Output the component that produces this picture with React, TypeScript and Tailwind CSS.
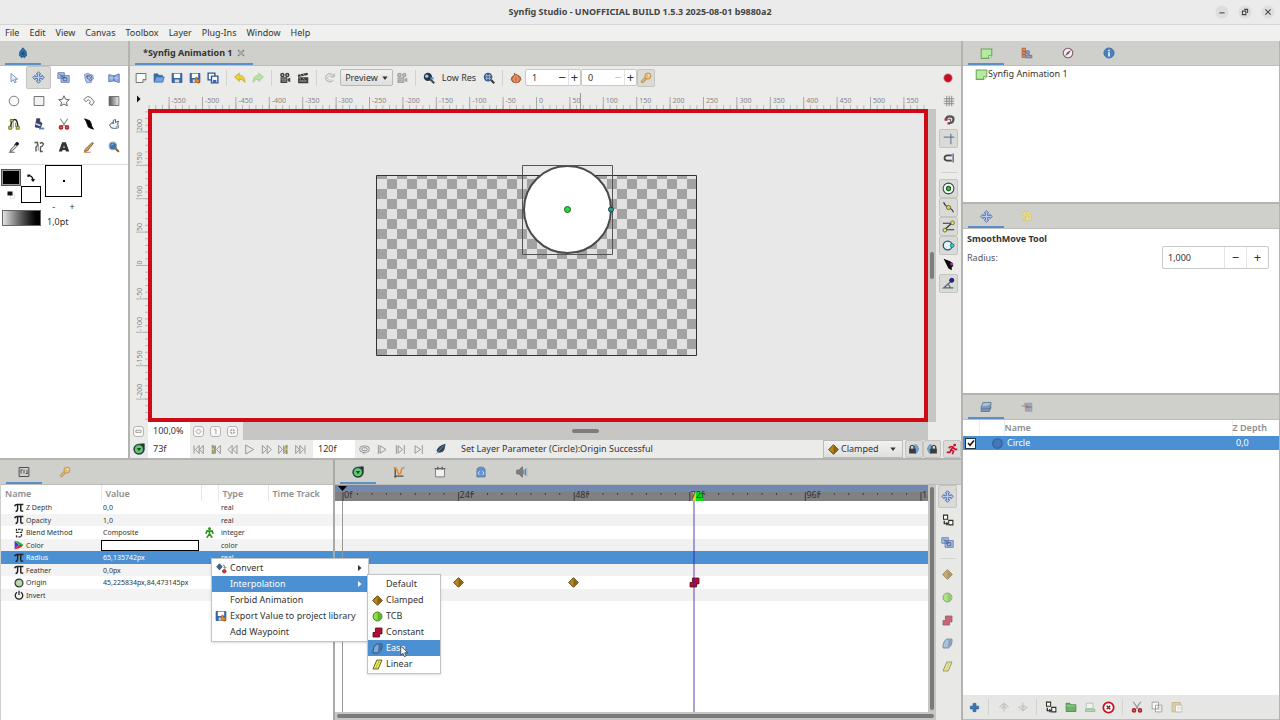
import type { ReactNode } from "react";

type IconProps = { className?: string };

function Svg({ children, className = "size-3", box = "0 0 16 16" }: { children: ReactNode; className?: string; box?: string }) {
  return (
    <svg viewBox={box} className={`shrink-0 ${className}`} fill="none" aria-hidden="true">
      {children}
    </svg>
  );
}

/* ---------- tool icons ---------- */

const Arrow = () => (
  <Svg><path d="M4 2v11l3-2.600 2 4 2-1-2-3.800h4z" fill="#e8eefc" stroke="#5b76ad" /></Svg>
);
const Move = ({ className = "size-[13px]" }: IconProps) => (
  <Svg className={className}>
    <path d="M8 .8l2.800 3H9.300v2.900h2.900V5.200l3 2.800-3 2.800V9.300H9.300v2.900h1.500L8 15.200l-2.800-3h1.500V9.300H3.800v1.500L.8 8l3-2.800v1.500h2.900V3.800H5.200z" fill="#b9cbf0" stroke="#4a68a6" />
  </Svg>
);
const Scale = ({ className = "size-[13px]" }: IconProps) => (
  <Svg className={className}>
    <path d="M1 2h8v7H1zM5 5.500h10V14H5z" fill="#a9bde6" stroke="#6079ab" />
    <path d="M3 4l7 5M7 8h5v4H8z" stroke="#40588f" />
  </Svg>
);
const Rotate = () => (
  <Svg>
    <path d="M2 3l5-1.500 2 1.500 4 1 1 5-2 2-1 3-6 .5-2-4z" fill="#b7c7ea" stroke="#7388b6" />
    <path d="M4 8a4 4 0 1 1 4 4M6 5l4 2-1 3-3-1z" stroke="#4a62a0" />
  </Svg>
);
const Mirror = () => (
  <Svg>
    <path d="M1 3.500l6.500 1.500v7L1 13zM15 2.500L8 5v7l7 2z" fill="#8fb0e4" stroke="#4668a6" />
    <path d="M2 8h12" stroke="#c6d8f6" />
  </Svg>
);
const CircleTool = () => <Svg><circle cx="8" cy="8" r="6.400" fill="#fafafa" stroke="#555" /></Svg>;
const RectTool = () => <Svg><path d="M1.500 2h13v12h-13z" fill="#f2f2f2" stroke="#666" strokeWidth="1.200" /></Svg>;
const StarTool = () => (
  <Svg><path d="M8 1l2.100 4.700 5 .5-3.800 3.400 1.100 5L8 12l-4.400 2.600 1.100-5L.9 6.200l5-.5z" fill="#fafafa" stroke="#555" strokeWidth="1.200" /></Svg>
);
const PolyTool = () => (
  <Svg><path d="M1 6l5-4 4 1 5 6-3 5-4-3 2-2-3-3-3 3z" fill="#fafafa" stroke="#666" strokeWidth="1.200" /></Svg>
);
const GradTool = () => (
  <Svg>
    <defs><linearGradient id="gt"><stop stopColor="#555" /><stop offset="1" stopColor="#eee" /></linearGradient></defs>
    <path d="M1.500 2h13v12h-13z" fill="url(#gt)" stroke="#555" />
  </Svg>
);
const Spline = () => (
  <Svg>
    <path d="M3 13L5 5q1-3 4-3 4 0 4 11" stroke="#2b2b2b" strokeWidth="2" />
    <path d="M7 13V6M10 6v6" stroke="#777" />
    <path d="M1 11h4v4H1zM11 11h4v4h-4zM3 2h4v3H3z" fill="#d5cc3a" stroke="#555a20" />
  </Svg>
);
const Bucket = () => (
  <Svg>
    <path d="M5 1h4v4l3 2-2 6-7-1 1-5z" fill="#38476f" stroke="#222b44" />
    <path d="M4 8l6 2" stroke="#dce4f6" strokeWidth="2" />
    <path d="M8 14h7" stroke="#5c87cc" strokeWidth="2.500" />
  </Svg>
);
const Scissors = ({ className = "size-3" }: IconProps) => (
  <Svg className={className}>
    <path d="M3 1l6.500 9.500M13 1L6.500 10.500" stroke="#999" strokeWidth="1.700" />
    <circle cx="4" cy="12.500" r="2.300" fill="#b3202c" stroke="#b3202c" strokeWidth="1.500" />
    <circle cx="12" cy="12.500" r="2.300" fill="#b3202c" stroke="#b3202c" strokeWidth="1.500" />
    <path d="M3.500 12.500h1M11.500 12.500h1" stroke="#f0d0d0" strokeWidth="1.500" />
  </Svg>
);
const Feather = ({ className = "size-3" }: IconProps) => (
  <Svg className={className}><path d="M2 1l7 2.500 2 4 .5 3L14 15l-4-1.500L7 12 5.500 8 4 4z" fill="#050505" stroke="#000" /></Svg>
);
const Sketch = () => (
  <Svg>
    <path d="M2 9l4-3 1 2V3l3-1v4l4-2-1 4 1 5-5 1-5-1z" fill="#f0f4fa" stroke="#506070" strokeWidth="1.300" />
    <circle cx="12" cy="12" r="2" fill="#9db4d6" />
  </Svg>
);
const Dropper = () => (
  <Svg>
    <path d="M9 5l2-3q2-1 3 1t-2 3l-3 1z" fill="#151515" stroke="#151515" />
    <path d="M10 5l-6 6-1 3 3-1 6-6" fill="#cfe0f0" stroke="#333" />
    <path d="M1 15h8" stroke="#333" />
  </Svg>
);
const Brushes = () => (
  <Svg>
    <path d="M2 2h4v4l-2 2v6M9 3l3-1 2 2-2 3-2 1v6h3" stroke="#555" strokeWidth="1.800" />
    <path d="M7 4v9" stroke="#999" strokeWidth="1.500" />
  </Svg>
);
const TextTool = () => (
  <Svg>
    <path d="M5.500 1.500h5L15 14H10.500l-.6-2H6.200l-.6 2H1z" fill="#333" />
    <path d="M8 5.500l1.100 3.700H6.900z" fill="#eee" />
  </Svg>
);
const Pencil = () => (
  <Svg>
    <path d="M3 11L12 2l2 1-8 10-4 1z" fill="#d9a04b" stroke="#6c4a22" />
    <path d="M1 15h9" stroke="#b8482f" />
  </Svg>
);
const Zoom = ({ className = "size-3" }: IconProps) => (
  <Svg className={className}>
    <circle cx="6.500" cy="6.500" r="5" fill="#3f73ad" stroke="#9aa7b6" strokeWidth="1.500" />
    <path d="M10 10l4.500 4.500" stroke="#8b5b28" strokeWidth="2.600" />
    <path d="M4 6q1-2 3-2" stroke="#b8d3f0" />
  </Svg>
);

/* ---------- file and render icons ---------- */

const NewDoc = () => (
  <Svg>
    <path d="M1.500 2h13v8l-4 4h-9z" fill="#fafafa" stroke="#666" strokeWidth="1.200" />
    <path d="M10.500 14v-4h4" fill="#ccc" stroke="#666" />
  </Svg>
);
const Open = () => (
  <Svg>
    <path d="M1.500 13V2.500h5l1 2h5V7" fill="#3c6ca6" stroke="#2f5c94" />
    <path d="M1.500 13.500L4 6.500h11l-2 7z" fill="#71a4dd" stroke="#3c6ca6" />
  </Svg>
);
const Save = ({ pencil = false }: { pencil?: boolean }) => (
  <Svg>
    <path d="M1.500 2h13v12h-13z" fill="#3d68a8" stroke="#274b80" />
    <path d="M3.800 2.200h8.400V8H3.800z" fill="#fff" />
    <path d="M5 10h6v4H5z" fill="#d5dae2" />
    {pencil && <path d="M9 7h2v3h3l-1 5-5-2z" fill="#ea8a2c" stroke="#b35d12" />}
  </Svg>
);
const SaveAll = () => (
  <Svg>
    <path d="M1.500 1.500h9v9h-9z" fill="#fff" stroke="#2c5596" strokeWidth="1.800" />
    <path d="M6 5.500h8.500v9H6z" fill="#fff" stroke="#2c5596" strokeWidth="1.800" />
    <path d="M8 10.500h4.500v4H8z" fill="#3d68a8" />
  </Svg>
);
const Undo = () => (
  <Svg><path d="M.8 6.500L7 1.500v3q8 0 7.500 9.500-2-4.500-7.500-4.500v3z" fill="#ecd03c" stroke="#c3a21e" /></Svg>
);
const Redo = () => (
  <Svg><path d="M15.200 6.500L9 1.500v3q-8 0-7.500 9.500 2-4.500 7.500-4.500v3z" fill="#b9e3a2" stroke="#9bcb83" /></Svg>
);
const Camera = ({ c = "#444" }: { c?: string }) => (
  <Svg>
    <circle cx="4.500" cy="4" r="3" fill={c} />
    <circle cx="11" cy="4" r="3" fill={c} />
    <path d="M2 7h9v7.500H2zM11.500 9L15 7.500v6l-3.500-1.500z" fill={c} />
    <path d="M3 9.500h7M4 12h6" stroke="#ddd" strokeWidth=".8" />
    <circle cx="4.500" cy="4" r="1" fill="#ddd" /><circle cx="11" cy="4" r="1" fill="#ddd" />
  </Svg>
);
const Clapper = () => (
  <Svg>
    <path d="M1 3.500L14 1l.5 3L1.500 6.500zM1.500 7h13.500v8H1.500z" fill="#3b3b3b" />
    <path d="M4 3l2 2.500M8 2.300l2 2.400M3 8l2 1.500M8 8l2 1.500M3 12h10" stroke="#ccc" />
  </Svg>
);
const Refresh = () => (
  <Svg>
    <path d="M12.500 10.500a5.500 5.500 0 1 1 0-5.500M13.500 2v4.500H9" stroke="#a5a5a5" strokeWidth="1.300" />
    <path d="M10 10a3 3 0 1 1 0-4" stroke="#bbb" />
  </Svg>
);
const ResDown = () => (
  <Svg>
    <circle cx="6.500" cy="6.500" r="5.500" fill="#26354b" />
    <circle cx="5" cy="5.500" r="2.300" fill="#a9c7e7" />
    <path d="M10 10l5 5" stroke="#444" strokeWidth="2.500" />
    <path d="M10 7h4v3h-4z" fill="#5f8ec7" />
  </Svg>
);
const ResUp = () => (
  <Svg>
    <circle cx="6.800" cy="6.800" r="5.800" fill="#3a5c8c" />
    <path d="M3 5h8M3 8.500h8M5 3v8M8.600 3v8" stroke="#b9cee6" strokeWidth=".9" />
    <path d="M11 11l4 4" stroke="#333" strokeWidth="2.500" />
  </Svg>
);
const Onion = () => (
  <Svg>
    <path d="M6 1.500q1 2 4 2.500 5 2 4.500 6-1.500 4.500-6.500 4.500T1.500 10q0-4 4-5.500z" fill="#d0754a" stroke="#8a482b" />
    <path d="M7 5Q3 9 7 14M8.500 5q4 4 1 9" stroke="#f0b898" />
  </Svg>
);
const Key = ({ className = "size-3" }: IconProps) => (
  <Svg className={className}>
    <path d="M8 8l-6 6" stroke="#a87b30" strokeWidth="3.600" />
    <path d="M8 8l-5.800 5.800" stroke="#e6bd71" strokeWidth="1.900" />
    <circle cx="10.600" cy="5.400" r="4.100" fill="#e6bd71" stroke="#b48a40" />
    <circle cx="11.800" cy="4.200" r="1" fill="#fff" />
  </Svg>
);

/* ---------- canvas side tools ---------- */

const Grid = () => <Svg><path d="M5 1v14M8.300 1v14M11.600 1v14M1 5h14M1 8.300h14M1 11.600h14" stroke="#777" /></Svg>;
const MagnetGrid = () => (
  <Svg>
    <path d="M4 8q0-5 5-5t5 4q0 5-6 5" stroke="#555" strokeWidth="3" />
    <path d="M2 6h4v3H2zM6 11h3v3H6z" fill="#a5314c" />
    <path d="M7 7h3v3" stroke="#222" />
  </Svg>
);
const Guides = () => <Svg><path d="M1 5.500h14M10.500 1v14" stroke="#4e6b8c" strokeWidth="1.300" /></Svg>;
const MagnetGuide = () => (
  <Svg>
    <path d="M11 4.500H6q-4 0-4 3.500t4 3.500h5" stroke="#444" strokeWidth="2.300" />
    <path d="M13.500 2v12" stroke="#3a4f90" strokeWidth="1.600" />
    <path d="M10 3.300h2v2.400h-2zM10 10.300h2v2.400h-2z" fill="#c8405a" />
  </Svg>
);
const Target = () => (
  <Svg className="size-[13px]">
    <circle cx="8" cy="8" r="6.600" fill="#f4f8f4" stroke="#2c4a46" strokeWidth="1.300" />
    <circle cx="8" cy="8" r="2.600" fill="#35c435" stroke="#17621d" strokeWidth="1.300" />
  </Svg>
);
const Vertex = () => (
  <Svg className="size-[13px]">
    <path d="M2 1.500q1 4 6 6.500 5 2 6 6" stroke="#333" strokeWidth="1.300" />
    <circle cx="8" cy="8" r="2.600" fill="#dfd535" stroke="#555" />
  </Svg>
);
const Tangent = () => (
  <Svg className="size-[13px]">
    <path d="M1 4h11M12 4L3 12M5 12h10" stroke="#333" strokeWidth="1.400" />
    <circle cx="13" cy="3.500" r="2.300" fill="#f0ea48" stroke="#555" />
    <circle cx="3.500" cy="12.500" r="2.300" fill="#f0ea48" stroke="#555" />
  </Svg>
);
const RadiusH = () => (
  <Svg className="size-[13px]">
    <circle cx="7" cy="8" r="5.500" fill="#e6f2f4" stroke="#1c5a66" strokeWidth="1.600" />
    <circle cx="12.500" cy="8" r="2.300" fill="#3bd6d6" stroke="#155a66" />
  </Svg>
);
const WidthH = () => (
  <Svg className="size-[13px]">
    <path d="M2 1l8 3 3 2 1 4-2 1v4l-4-2-2-4z" fill="#070707" />
    <circle cx="12" cy="7.500" r="1.900" fill="#b22aa0" />
  </Svg>
);
const AngleH = () => (
  <Svg className="size-[13px]">
    <path d="M12.500 4L2 13.500h12M7 9q3 1.500 3 4.500" stroke="#536778" strokeWidth="1.500" />
    <circle cx="12" cy="4" r="2.500" fill="#23239a" stroke="#0e0e5c" />
  </Svg>
);

/* ---------- interpolation shapes ---------- */

const Clamped = ({ className = "size-[11px]" }: IconProps) => (
  <Svg className={className}>
    <path d="M8 1l7 7-7 7-7-7z" fill="#b9861f" stroke="#5b420f" strokeWidth="1.400" />
    <path d="M8 2v12l6-6z" fill="#8a6112" />
  </Svg>
);
const Tcb = ({ className = "size-[11px]" }: IconProps) => (
  <Svg className={className}>
    <circle cx="8" cy="8" r="6.500" fill="#8be04a" stroke="#3a6b1f" strokeWidth="1.300" />
    <path d="M8 1.800a6.200 6.200 0 0 1 0 12.400z" fill="#5cb82a" />
  </Svg>
);
const Constant = ({ className = "size-[11px]" }: IconProps) => (
  <Svg className={className}><path d="M5 1.500h9.500V10H11v4.500H1.500V8H5z" fill="#b00f33" stroke="#650a1e" strokeWidth="1.300" /></Svg>
);
const Ease = ({ className = "size-[11px]" }: IconProps) => (
  <Svg className={className}>
    <path d="M6.500 1.500h8V6q-.5 6-5 8.500h-8V11q.5-6 5-9.500z" fill="#7fa9d6" stroke="#274668" strokeWidth="1.300" />
    <path d="M9.500 2.500h4.500V6q-.5 5-5 7.500H8q2-4 1.500-11z" fill="#456f9f" />
  </Svg>
);
const Linear = ({ className = "size-[11px]" }: IconProps) => (
  <Svg className={className}>
    <path d="M7 1.500h7.500L9 14.500H1.500z" fill="#f0ee5a" stroke="#5e5d22" strokeWidth="1.400" />
    <path d="M10.500 2.500L5.500 13.500" stroke="#b9b63a" strokeWidth="1.500" />
  </Svg>
);

/* ---------- playback and panels ---------- */

const play: Record<string, ReactNode> = {
  first: <path d="M1.500 2v12M3.500 8L9 2v12zM9.500 8L15 2v12z" />,
  prev: <path d="M8 8L2 2v12zM15 8L9 2v12z" transform="matrix(-1 0 0 1 16.500 0)" />,
  play: <path d="M2.500 1.500L14 8 2.500 14.500z" />,
  next: <path d="M8 8L2 2v12zM15 8L9 2v12z" />,
  last: <path d="M14.500 2v12M12.500 8L7 2v12zM6.500 8L1 2v12z" />,
  prevKey: <><path d="M9.500 8L15 2v12zM8 2v12" /><path d="M4 14.500V8M4 1.500V7" stroke="#a2964a" strokeWidth="3" /><path d="M6.500 3v11" /></>,
  nextKey: <><path d="M6.500 8L1 2v12zM8 2v12" /><path d="M12.500 14.500V8M12.500 1.500V7" stroke="#a2964a" strokeWidth="3" /><path d="M10 3v11" /></>,
  loop: <><rect x="1" y="3" width="14" height="9" rx="4.500" /><rect x="4" y="5.500" width="8" height="4" rx="2" /><path d="M6 12l2 3" /></>,
  bound: <path d="M2 1.500v13M4.500 2.500L13 8l-8.500 5.500z" />,
  boundBoth: <path d="M2 1.500v13M4.500 2.500L11 8l-6.500 5.500zM13.500 1.500v13" />,
  boundEnd: <path d="M3 2.500L11 8l-8 5.500zM13.500 1.500v13" />,
};
const Play = ({ kind }: { kind: string }) => (
  <Svg className="size-[11px]"><g stroke="#858585" strokeWidth="1.200">{play[kind]}</g></Svg>
);
const TimeLeaf = ({ className = "size-3" }: IconProps) => (
  <Svg className={className}>
    <path d="M15 1v8q-1 6-7 6T1 8.500Q1 2 8 1.500z" fill="#243f38" stroke="#1d3833" />
    <circle cx="7.800" cy="8.200" r="5" fill="#58d44e" stroke="#8ab5e8" strokeWidth=".8" />
    <path d="M5 6.500h6L8 11z" fill="#1d4e2a" />
  </Svg>
);
const Quill = () => (
  <Svg>
    <path d="M14 1Q5 3 2 10l2 3q8 0 9-6z" fill="#2f4459" />
    <path d="M1 15L12 3" stroke="#8da3ba" />
  </Svg>
);
const LockPast = ({ flip = false }: { flip?: boolean }) => (
  <Svg>
    <g transform={flip ? "matrix(-1 0 0 1 16 0)" : undefined}>
      <path d="M8 2h4l3 6-3 6H8z" fill="#6d9fd0" />
      <path d="M3 8V5q2.500-4 5 0v3" stroke="#333" strokeWidth="1.600" />
      <path d="M1.500 7.500h9V14h-9z" fill="#3c3c3c" />
    </g>
  </Svg>
);
const Runner = () => (
  <Svg>
    <circle cx="11.500" cy="2.800" r="1.900" fill="#c8102a" />
    <path d="M10 5L6.500 9l3.500 2-1.500 4M6.500 9.500L5 12.500H1M10 5H5.500L3.500 7M10 6.500l2 2h3" stroke="#c8102a" strokeWidth="2.100" />
  </Svg>
);
const Params = () => (
  <Svg>
    <path d="M1.500 2h13v12h-13z" stroke="#4c4c4c" strokeWidth="1.300" />
    <path d="M4 5v5M4 5h2M8 5v5M12 5v5M10.500 10H13" stroke="#4c4c4c" strokeWidth="1.300" />
  </Svg>
);
const Graph = () => (
  <Svg>
    <path d="M3 3v10.500h11M1.500 14.500h3M3 1.500v3" stroke="#444" strokeWidth="1.800" />
    <path d="M1 3q4-1 5 4t4 3q1-1 1-4t4-4" stroke="#e8872c" strokeWidth="2.300" />
  </Svg>
);
const Meta = () => (
  <Svg>
    <path d="M2 3.500h12v11H2z" fill="#f5f5f5" stroke="#555" />
    <path d="M1 3.500h14M5 1v4M11 1v4" stroke="#555" strokeWidth="1.800" />
  </Svg>
);
const Library = () => (
  <Svg>
    <path d="M2.500 14.500V6q0-4.500 5.500-4.500T13.500 6v8.500z" fill="#5b8dcc" stroke="#3d69a5" />
    <path d="M6 7L4 9.500 6 12M10 7l2 2.500L10 12" stroke="#fff" />
  </Svg>
);
const Sound = () => (
  <Svg>
    <path d="M1 5.500h3L8.500 1v14L4 10.500H1z" fill="#777" stroke="#555" />
    <path d="M10.500 5v6M12.500 3.500v9" stroke="#5878a8" strokeWidth="1.500" />
    <path d="M14.500 2v12" stroke="#8aa3c8" />
  </Svg>
);
const Duplicate = () => (
  <Svg>
    <path d="M2 1.500h5.500V7H2zM9 8.500h5.500v6H9z" fill="#fff" stroke="#2d2d1e" strokeWidth="1.400" />
    <path d="M3 9v4h4M6 11l1.500 2L6 15" stroke="#222" strokeWidth="1.600" />
  </Svg>
);
const CanvasNote = () => (
  <Svg className="size-[13px]">
    <path d="M1.500 2.500h13v8l-4 3.500h-9z" fill="#b5eaa0" stroke="#68a85c" strokeWidth="1.300" />
    <path d="M10.500 14v-3.500h4" fill="#e2f9d9" stroke="#68a85c" />
  </Svg>
);
const Palette = () => (
  <Svg>
    <path d="M1.500 1.500H6V14H1.500z" fill="#e2803c" stroke="#a9522a" />
    <path d="M7 5h4v4H7zM6.500 11h8v3.500h-8z" fill="#8b98bb" stroke="#5b678c" />
    <path d="M2 6h4M2 10h4M9 9l4 3" stroke="#6b4b7a" />
  </Svg>
);
const Compass = () => (
  <Svg>
    <circle cx="8" cy="8" r="6.400" fill="#f4f0f4" stroke="#7b5262" strokeWidth="1.500" />
    <path d="M12 4L9 9 4 12l3-5z" fill="#7b3a55" />
  </Svg>
);
const Info = () => (
  <Svg>
    <circle cx="8" cy="8" r="6.800" fill="#3d78bf" stroke="#2b5d9c" />
    <path d="M8 7v5.500M8 3.500v2" stroke="#fff" strokeWidth="2.100" />
  </Svg>
);
const History = () => (
  <Svg>
    <path d="M2 3l6-1.500q6 3 6 9l-3 4-9-1q6-1 5-5L2 7z" fill="#eee08a" stroke="#d6c463" />
    <path d="M5 4q5 1 6 7" stroke="#c9b553" />
  </Svg>
);
const LayersIcon = () => (
  <Svg>
    <path d="M4 2h11l-2.500 6h-11z" fill="#a9c3de" stroke="#546b83" />
    <path d="M1.500 8v2.500h11L15 4.500M1.500 11v3h11l2.500-6" fill="#7d9cbd" stroke="#546b83" />
  </Svg>
);
const SetsIcon = () => (
  <Svg>
    <path d="M5 3h9.500v10.500H6z" fill="#93a7c2" stroke="#8494ab" />
    <path d="M1 6.500h8M7 4l3 3-3 3" stroke="#c9817b" strokeWidth="1.800" />
    <path d="M6 8h8" stroke="#555" />
  </Svg>
);
const PlusBlue = () => <Svg className="size-[11px]"><path d="M6 2h4v4h4v4h-4v4H6v-4H2V6h4z" fill="#3a76b8" stroke="#2a5a92" /></Svg>;
const Chevrons = ({ down = false }: { down?: boolean }) => (
  <Svg>
    <path transform={down ? "matrix(1 0 0 -1 0 16)" : undefined} d="M2 8.500L8 3l6 5.500M5 10l3-3 3 3M8 4v10" stroke="#c2c2c2" strokeWidth="1.500" />
  </Svg>
);
const FolderGreen = () => (
  <Svg><path d="M1.500 3h5l1 2h7v9h-13z" fill="#6db36b" stroke="#3f7f41" /><path d="M2 6.500h12" stroke="#a3dba0" /></Svg>
);
const FolderPale = () => (
  <Svg><path d="M3 3h9v7H3z" fill="#eef4ec" stroke="#a8baa6" /><path d="M2 11h12.500v3H2z" fill="#b9d6b3" stroke="#98ac95" /></Svg>
);
const DeleteRed = () => (
  <Svg className="size-[13px]">
    <circle cx="8" cy="8" r="6.400" fill="#fff" stroke="#cc0f24" strokeWidth="2.200" />
    <path d="M5.800 5.800l4.400 4.400M10.200 5.800l-4.400 4.400" stroke="#7a1220" strokeWidth="1.500" />
  </Svg>
);
const Copy = () => (
  <Svg>
    <path d="M1.500 1.500h8.500v9H1.500zM6 5.500h8.500v9H6z" fill="#fafafa" stroke="#8c8c8c" />
    <path d="M8 8.500h5M8 11h5" stroke="#bbb" />
  </Svg>
);
const Paste = () => (
  <Svg>
    <path d="M1.500 2h11v12.500h-11z" fill="#dcd0ac" stroke="#b9ab80" />
    <path d="M6 5.500h8.500v9H6z" fill="#fafafa" stroke="#b5b5b5" />
    <path d="M8 8.500h5M8 11h5" stroke="#ccc" />
  </Svg>
);
const Leaf = () => (
  <Svg>
    <path d="M8 1q6 5 4.500 11Q8 15 3.500 12 2 6 8 1z" fill="#2f74b3" stroke="#1f4f7d" />
    <path d="M6 11V7q2-2 4 0v4z" fill="#1c4f80" />
    <path d="M6 13v2M10 13v2" stroke="#1f4f7d" />
  </Svg>
);
const Pi = () => (
  <Svg className="size-[10px]"><path d="M1 5q1-2.500 4-2.500h10M5.800 3v6q0 4-3.300 4.500M10.800 3v8q0 3 4 1.500" stroke="currentColor" strokeWidth="2.300" /></Svg>
);
const IntIcon = () => (
  <Svg className="size-[10px]"><path d="M13 5V2H4v5h8v7H4v-3" stroke="#333" strokeWidth="2" strokeDasharray="4 1.500" /></Svg>
);
const ColorIcon = () => (
  <Svg className="size-[10px]">
    <path d="M1 1l7 7H1z" fill="#2b3fd6" /><path d="M1 1q9 1 14 7H8z" fill="#28b34a" /><path d="M15 8H8l-7 7q9-1 14-7z" fill="#d92a35" /><path d="M1 8h7l-7 7z" fill="#7a2bc0" />
  </Svg>
);
const OriginIcon = () => <Svg className="size-[10px]"><circle cx="8" cy="8" r="6.300" fill="#b9d6ab" stroke="#333" strokeWidth="1.900" /></Svg>;
const Power = () => (
  <Svg className="size-[10px]"><path d="M5 3.500a6 6 0 1 0 6 0M8 1v7" stroke="#222" strokeWidth="2" /></Svg>
);
const Walker = () => (
  <Svg className="size-[11px]">
    <circle cx="8" cy="2.500" r="2.100" fill="#2f8f1f" />
    <path d="M8 5v5M8 10l-4 5.500M8 10l4 5.500M3 10l1-4h8l1 4" stroke="#2f8f1f" strokeWidth="2.400" />
  </Svg>
);
const ConvertIcon = () => (
  <Svg className="size-[11px]">
    <path d="M5 1l4 4.500L5 10 1 5.500z" fill="#3d6694" stroke="#26415f" />
    <path d="M10 3q3 0 3 4M11 6l2 2 2-2" stroke="#333" />
    <circle cx="12" cy="12" r="2.600" fill="#d13838" stroke="#8c1f1f" />
  </Svg>
);

/* ---------- small building blocks ---------- */

function IconButton({ label, children, pressed, className = "h-[18px] w-[18px]" }: { label: string; children: ReactNode; pressed?: boolean; className?: string }) {
  return (
    <button
      type="button"
      aria-label={label}
      className={`flex shrink-0 items-center justify-center rounded-[2px] border ${pressed ? "border-[#c4c4c0] bg-[#dadad7]" : "border-transparent"} ${className}`}
    >
      {children}
    </button>
  );
}

function Tabs({ items }: { items: [string, ReactNode][] }) {
  return (
    <div role="tablist" className="flex h-[25px] shrink-0 gap-[5px] border-b border-[#bcbcb9] bg-[#cfcfcc] px-[5px]">
      {items.map(([label, icon], i) => (
        <button
          key={label}
          type="button"
          role="tab"
          aria-label={label}
          aria-selected={i === 0}
          className={`flex w-9 items-center justify-center border-b-2 pt-0.5 ${i === 0 ? "border-[#5a8fc8]" : "border-transparent opacity-90"}`}
        >
          {icon}
        </button>
      ))}
    </div>
  );
}

const Sep = () => <span className="mx-1 h-4 w-px shrink-0 bg-[#d2d2d0]" />;

/* ---------- toolbox ---------- */

const tools: [string, ReactNode][] = [
  ["Transform", <Arrow />], ["SmoothMove", <Move />], ["Scale", <Scale />], ["Rotate", <Rotate />], ["Mirror", <Mirror />],
  ["Circle", <CircleTool />], ["Rectangle", <RectTool />], ["Star", <StarTool />], ["Polygon", <PolyTool />], ["Gradient", <GradTool />],
  ["Spline", <Spline />], ["Fill", <Bucket />], ["Cutout", <Scissors />], ["Width", <Feather />], ["Draw", <Sketch />],
  ["Eyedrop", <Dropper />], ["Brush", <Brushes />], ["Text", <TextTool />], ["Sketch", <Pencil />], ["Zoom", <Zoom />],
];

function Toolbox() {
  return (
    <aside className="flex w-[130px] shrink-0 flex-col border-r-2 border-[#b3b3b1] bg-white">
      <Tabs items={[["Toolbox", <Leaf />]]} />
      <div className="grid grid-cols-5 border-b border-[#dcdcdc] px-px pb-1.5">
        {tools.map(([label, icon], i) => (
          <IconButton key={label} label={label} pressed={i === 1} className="h-[23px] w-full">{icon}</IconButton>
        ))}
      </div>
      <div className="flex gap-1 px-px">
        <div className="flex w-10 flex-col pt-1">
          <div className="grid h-[34px] grid-cols-2">
            <button type="button" aria-label="Outline color" className="border border-[#555] bg-black ring-1 ring-inset ring-[#999]" />
            <button type="button" aria-label="Swap colors" className="flex items-center justify-center">
              <Svg className="size-2"><path d="M2 6V2h4M3 3q8 0 9 9M9 10l3 4 3-4" stroke="#111" strokeWidth="2.500" /></Svg>
            </button>
            <button type="button" aria-label="Reset colors" className="flex items-center justify-center">
              <Svg className="size-2"><path d="M7 7h8v8H7z" fill="#fff" stroke="#ccc" /><path d="M1 1h10v8H1z" fill="#111" /></Svg>
            </button>
            <button type="button" aria-label="Fill color" className="border border-black bg-white" />
          </div>
          <button type="button" aria-label="Gradient" className="ml-px mt-[7px] h-4 border border-[#666] bg-linear-to-r from-[#e4e4e4] to-black" />
        </div>
        <div className="flex flex-col">
          <div className="flex h-8 w-[37px] items-center justify-center border border-black">
            <span className="size-0.5 bg-black" />
          </div>
          <div className="flex h-[18px] w-[37px] items-center justify-around leading-[9px]">
            <button type="button" aria-label="Decrease width">-</button>
            <button type="button" aria-label="Increase width">+</button>
          </div>
          <span className="pl-0.5 leading-[14px]">1,0pt</span>
        </div>
      </div>
    </aside>
  );
}

/* ---------- canvas ---------- */

const STEP = 33.4;
const majors = Array.from({ length: 23 }, (_, i) => i - 11);

function TopRuler() {
  return (
    <svg className="h-[16px] min-w-0 flex-1" role="img" aria-label="Horizontal ruler">
      <svg x="50%" overflow="visible">
        {Array.from({ length: 117 }, (_, i) => i - 58).map((i) => (
          <path key={i} d={`M${(i * STEP) / 5 - 1.500} 16v-4`} stroke="#bababa" />
        ))}
        {majors.map((m) => (
          <g key={m}>
            <path d={`M${m * STEP - 1.500} 16V4`} stroke="#a8a8a8" />
            <text x={m * STEP + 1} y="10" fontSize="7" fill="#858585">{m * 50}</text>
          </g>
        ))}
        <path d="M42.500 0v16" stroke="#999" />
      </svg>
    </svg>
  );
}

function LeftRuler() {
  return (
    <svg className="w-[13px] shrink-0" role="img" aria-label="Vertical ruler">
      <svg y="50%" overflow="visible">
        {Array.from({ length: 47 }, (_, i) => i - 23).map((i) => (
          <path key={i} d={`M13 ${(i * STEP) / 5}h-3`} stroke="#bababa" />
        ))}
        {majors.slice(7, 16).map((m) => (
          <g key={m}>
            <path d={`M13 ${m * STEP}H1`} stroke="#b4b4b4" />
            <text transform={`translate(7 ${m * STEP - 1}) rotate(-90)`} fontSize="7" fill="#858585">{-m * 50}</text>
          </g>
        ))}
      </svg>
    </svg>
  );
}

function Stage() {
  return (
    <div className="flex min-w-0 flex-1 items-center justify-center overflow-hidden border-4 border-[#cf0a17] bg-[#e8e8e8]">
      <svg className="h-[205px] w-[324px]" viewBox="0 0 324 205" role="img" aria-label="Circle on the animation canvas">
        <defs>
          <pattern id="checker" x="11" y="16" width="20" height="20" patternUnits="userSpaceOnUse">
            <path d="M0 0h20v20H0z" fill="#e2e2e2" />
            <path d="M0 0h10v10H0zM10 10h10v10H10z" fill="#a2a2a2" />
          </pattern>
        </defs>
        <path d="M.5 12.500h320v180H.5z" fill="url(#checker)" stroke="#333" />
        <circle cx="191.500" cy="46.500" r="43.500" fill="#fff" stroke="#4a4a4a" strokeWidth="2" />
        <path d="M146.500 2.500h90v89h-90z" stroke="#555" fill="none" />
        <circle cx="191.500" cy="46.500" r="3" fill="#2fd83a" stroke="#1a5c22" />
        <circle cx="235" cy="46.500" r="2.500" fill="#2d9c8c" stroke="#14433e" />
      </svg>
    </div>
  );
}

function Spin({ label, value, dim }: { label: string; value: string; dim?: boolean }) {
  return (
    <div className="flex h-[17px] shrink-0 overflow-hidden rounded-[2px] border border-[#c9c9c6] bg-white">
      <input aria-label={label} defaultValue={value} className="w-[30px] pl-1.5 leading-none outline-none" />
      <button type="button" aria-label={`Decrease ${label}`} className={`flex w-3 items-center justify-center text-[13px] leading-none ${dim ? "text-[#ccc]" : ""}`}>−</button>
      <button type="button" aria-label={`Increase ${label}`} className="flex w-3 items-center justify-center border-l border-[#e2e2e2] text-[13px] leading-none">+</button>
    </div>
  );
}

function CanvasToolbar() {
  return (
    <div className="flex h-[23px] shrink-0 items-center bg-[#ebebea] pl-[2px] pr-1">
      <IconButton label="New"><NewDoc /></IconButton>
      <IconButton label="Open"><Open /></IconButton>
      <IconButton label="Save"><Save /></IconButton>
      <IconButton label="Save as"><Save pencil /></IconButton>
      <IconButton label="Save all"><SaveAll /></IconButton>
      <Sep />
      <IconButton label="Undo"><Undo /></IconButton>
      <IconButton label="Redo"><Redo /></IconButton>
      <Sep />
      <IconButton label="Render"><Camera /></IconButton>
      <IconButton label="Preview window"><Clapper /></IconButton>
      <Sep />
      <IconButton label="Refresh"><Refresh /></IconButton>
      <button type="button" className="ml-px flex h-[17px] w-[53px] shrink-0 items-center justify-center gap-1 rounded-[2px] border border-[#b9b9b6] bg-linear-to-b from-[#f2f2f2] to-[#dfdfdd]">
        Preview
        <Svg className="size-1.5"><path d="M1 4h14l-7 9z" fill="#333" /></Svg>
      </button>
      <IconButton label="Background rendering"><Camera c="#a3a3a3" /></IconButton>
      <Sep />
      <IconButton label="Decrease resolution"><ResDown /></IconButton>
      <button type="button" className="w-[42px] shrink-0 whitespace-nowrap text-center">Low Res</button>
      <IconButton label="Increase resolution"><ResUp /></IconButton>
      <Sep />
      <IconButton label="Onion skin"><Onion /></IconButton>
      <Spin label="Past onion skins" value="1" />
      <Spin label="Future onion skins" value="0" dim />
      <IconButton label="Onion skin keyframes" pressed><Key /></IconButton>
      <span className="flex-1" />
      <IconButton label="Animate editing mode">
        <Svg><circle cx="8" cy="8" r="5.500" fill="#cc0a1c" stroke="#b06a70" /></Svg>
      </IconButton>
    </div>
  );
}

const sideTools: [string, ReactNode, boolean][] = [
  ["Show grid", <Grid />, false], ["Snap to grid", <MagnetGrid />, false], ["Show guides", <Guides />, true], ["Snap to guides", <MagnetGuide />, false],
];
const handleTools: [string, ReactNode, boolean][] = [
  ["Position handles", <Target />, true], ["Vertex handles", <Vertex />, true], ["Tangent handles", <Tangent />, true],
  ["Radius handles", <RadiusH />, true], ["Width handles", <WidthH />, false], ["Angle handles", <AngleH />, true],
];

const MiniBtn = ({ label, children }: { label: string; children: ReactNode }) => (
  <button type="button" aria-label={label} className="flex w-[17px] shrink-0 items-center justify-center">
    <span className="flex size-[11px] items-center justify-center rounded-[3px] border border-[#b4b4b1] bg-[#f8f8f8]">
      <Svg className="size-[7px]"><g stroke="#999" strokeWidth="2">{children}</g></Svg>
    </span>
  </button>
);

function CanvasPanel() {
  return (
    <section className="flex min-w-0 flex-1 flex-col bg-[#ebebea]">
      <div role="tablist" className="flex h-[25px] shrink-0 border-b border-[#bcbcb9] bg-[#cfcfcc] pl-[5px]">
        <div className="flex w-[118px] items-center gap-1 border-b-2 border-[#5a8fc8] pl-2 pt-0.5">
          <button type="button" role="tab" aria-selected="true" className="whitespace-nowrap font-bold">*Synfig Animation 1</button>
          <button type="button" aria-label="Close tab">
            <Svg className="size-2"><path d="M2 2l12 12M14 2L2 14" stroke="#888" strokeWidth="3.500" /><path d="M4 4l8 8M12 4l-8 8" stroke="#ccc" /></Svg>
          </button>
        </div>
      </div>
      <CanvasToolbar />
      <div className="flex min-h-0 flex-1">
        <div className="flex min-w-0 flex-1 flex-col">
          <div className="flex h-5 shrink-0 items-end pr-2">
            <span className="flex w-[18px] justify-center pb-1.5">
              <Svg className="size-2"><path d="M4 1l7 7-7 7z" fill="#111" /></Svg>
            </span>
            <TopRuler />
          </div>
          <div className="flex min-h-0 flex-1 pl-[5px]">
            <LeftRuler />
            <Stage />
            <div className="flex w-2 shrink-0 flex-col items-center justify-center bg-[#c6c6c4]">
              <span className="h-[27px] w-1 rounded-full bg-[#7d7d7d]" />
            </div>
          </div>
          <div className="mr-2 flex h-[18px] shrink-0 items-stretch">
            <MiniBtn label="Zoom out"><path d="M2 5h12v5H2z" /></MiniBtn>
            <input aria-label="Zoom level" defaultValue="100,0%" className="ml-px w-[42px] bg-white pl-[5px] outline-none" />
            <MiniBtn label="Zoom in"><path d="M8 2l6 6-6 6-6-6z" /></MiniBtn>
            <MiniBtn label="Zoom to 100%"><path d="M5 3h4v11" /></MiniBtn>
            <MiniBtn label="Zoom to fit"><path d="M2 6h4V2M14 6h-4V2M2 10h4v4M14 10h-4v4" /></MiniBtn>
            <div className="ml-[2px] flex flex-1 items-center justify-center bg-[#c6c6c4]">
              <span className="h-1 w-[27px] rounded-full bg-[#7d7d7d]" />
            </div>
          </div>
        </div>
        <div className="flex w-[25px] shrink-0 flex-col items-center pt-[2px]">
          {sideTools.map(([l, icon, on]) => <IconButton key={l} label={l} pressed={on} className="h-[19px] w-[19px]">{icon}</IconButton>)}
          <span className="mb-1.5 mt-[5px] h-px w-4 shrink-0 bg-[#d2d2d0]" />
          {handleTools.map(([l, icon, on]) => <IconButton key={l} label={l} pressed={on} className="h-[19px] w-[19px]">{icon}</IconButton>)}
        </div>
      </div>
      <div className="flex h-[18px] shrink-0 items-stretch">
        <span className="flex w-[17px] shrink-0 items-center justify-center"><TimeLeaf /></span>
        <input aria-label="Current frame" defaultValue="73f" className="ml-px w-[42px] bg-white pl-[5px] outline-none" />
        {["first", "prevKey", "prev", "play", "next", "nextKey", "last"].map((k) => (
          <button key={k} type="button" aria-label={k} className="flex w-[17px] shrink-0 items-center justify-center"><Play kind={k} /></button>
        ))}
        <input aria-label="Last frame" defaultValue="120f" className="ml-1 w-[42px] bg-white pl-[5px] outline-none" />
        {["loop", "bound", "boundBoth", "boundEnd"].map((k) => (
          <button key={k} type="button" aria-label={k} className="flex w-[18px] shrink-0 items-center justify-center"><Play kind={k} /></button>
        ))}
        <span className="flex w-7 shrink-0 items-center justify-center"><Quill /></span>
        <output className="flex min-w-0 flex-1 items-center whitespace-nowrap pl-1.5">Set Layer Parameter (Circle):Origin Successful</output>
        <label className="flex w-20 shrink-0 items-center border border-[#bbbbb8] bg-linear-to-b from-[#f2f2f2] to-[#dfdfdd] pl-1">
          <Clamped />
          <select aria-label="Default interpolation" className="w-full appearance-none bg-transparent pl-[2px] outline-none" defaultValue="Clamped">
            <option>Clamped</option>
          </select>
          <Svg className="mr-1.5 size-1.5"><path d="M1 4h14l-7 9z" fill="#333" /></Svg>
        </label>
        <span className="w-[2px]" />
        <IconButton label="Lock past keyframes" pressed><LockPast /></IconButton>
        <IconButton label="Lock future keyframes" pressed><LockPast flip /></IconButton>
        <span className="w-[2px]" />
        <IconButton label="Animate mode" pressed><Runner /></IconButton>
      </div>
    </section>
  );
}

/* ---------- parameters ---------- */

const rows: { name: string; icon: ReactNode; value: string; type: string; anim?: boolean }[] = [
  { name: "Z Depth", icon: <Pi />, value: "0,0", type: "real" },
  { name: "Opacity", icon: <Pi />, value: "1,0", type: "real" },
  { name: "Blend Method", icon: <IntIcon />, value: "Composite", type: "integer", anim: true },
  { name: "Color", icon: <ColorIcon />, value: "", type: "color" },
  { name: "Radius", icon: <Pi />, value: "65,135742px", type: "real" },
  { name: "Feather", icon: <Pi />, value: "0,0px", type: "" },
  { name: "Origin", icon: <OriginIcon />, value: "45,225834px,84,473145px", type: "" },
  { name: "Invert", icon: <Power />, value: "", type: "" },
];
const SELECTED = 4;

function ParamsPanel() {
  return (
    <section className="flex w-[335px] shrink-0 flex-col border-l border-r-2 border-l-[#cfcfcc] border-r-[#a9a9a7] bg-white">
      <Tabs items={[["Parameters", <Params />], ["Keyframes", <Key />]]} />
      <table className="w-full table-fixed border-collapse text-left text-[7px] leading-[9px]">
        <colgroup>
          <col className="w-[100px]" /><col className="w-[100px]" /><col className="w-[17px]" /><col className="w-[50px]" /><col />
        </colgroup>
        <thead>
          <tr className="h-4 text-[9px] text-[#8d8d8d]">
            <th className="border-r border-[#e6e6e6] py-0 pl-1 pr-0 font-semibold">Name</th>
            <th className="border-r border-[#e6e6e6] py-0 pl-1 pr-0 font-semibold">Value</th>
            <th className="border-r border-[#e6e6e6] p-0" aria-label="Animated" />
            <th className="border-r border-[#e6e6e6] py-0 pl-1 pr-0 font-semibold">Type</th>
            <th className="py-0 pl-1 pr-0 font-semibold">Time Track</th>
          </tr>
        </thead>
        <tbody>
          {rows.map((r, i) => (
            <tr key={r.name} className={`odd:h-[13px] even:h-[12px] ${i === SELECTED ? "bg-[#4a90d2] text-white" : i % 2 ? "bg-[#f3f3f3]" : "bg-white"}`}>
              <td className="p-0">
                <span className="flex items-center gap-[2px] whitespace-nowrap pl-[13px]">
                  <span className="text-[#222]">{r.icon}</span>
                  {r.name}
                </span>
              </td>
              <td className="p-0">
                {r.name === "Color"
                  ? <button type="button" aria-label="Color value" className="block h-[11px] w-[98px] border border-black bg-white" />
                  : <span className="block whitespace-nowrap pl-[2px]">{r.value}</span>}
              </td>
              <td className="p-0">{r.anim && <span className="flex justify-center"><Walker /></span>}</td>
              <td className="p-0 pl-[3px]">{r.type}</td>
              <td className="p-0" />
            </tr>
          ))}
        </tbody>
      </table>
    </section>
  );
}

/* ---------- timeline ---------- */

const MINOR = 14.45;

function TimeRuler() {
  return (
    <svg className="block h-4 w-full" role="img" aria-label="Timeline ruler">
      <path d="M0 0h2000v7H0z" fill="#7288ae" />
      <path d="M0 7h2000v9H0z" fill="#808080" />
      <path d="M358 6h3v10h-3z" fill="#e0d010" />
      <path d="M361 6h7v10h-7z" fill="#10d820" />
      {Array.from({ length: 41 }, (_, i) => (
        <path key={i} d={`M${8 + i * MINOR} ${i % 8 ? 8 : 7}v${i % 8 ? 2 : 9}`} stroke="#3c3c3c" />
      ))}
      {Array.from({ length: 6 }, (_, i) => (
        <text key={i} x={9 + i * MINOR * 8} y="13" fontSize="9" fill="#333">{i * 24}f</text>
      ))}
      <path d="M3 1h9l-4.500 5z" fill="#000" />
    </svg>
  );
}

const timelineTools: [string, ReactNode][] = [
  ["Move waypoints", <Move />], ["Duplicate waypoints", <Duplicate />], ["Scale waypoints", <Scale />],
];

function Timeline() {
  return (
    <section className="flex min-w-0 flex-1 flex-col bg-[#e8e8e7]">
      <Tabs
        items={[["Timetrack", <TimeLeaf />], ["Graphs", <Graph />], ["Canvas metadata", <Meta />], ["Library", <Library />], ["Sound", <Sound />]]}
      />
      <div className="flex min-h-0 flex-1">
        <div className="flex min-w-0 flex-1 flex-col bg-[#c6c6c4]">
          <div className="flex min-h-0 flex-1">
            <div className="relative min-w-0 flex-1 overflow-hidden bg-white">
              <TimeRuler />
              {rows.map((r, i) => (
                <div key={r.name} className={`${i % 2 ? "h-[12px]" : "h-[13px]"} ${i === SELECTED ? "bg-[#4a90d2]" : i % 2 ? "bg-[#f1f1f1]" : "bg-white"}`} />
              ))}
              <span className="absolute bottom-0 left-[7px] top-4 w-px bg-[#999]" />
              <span className="absolute left-[118px] top-[92px]"><Clamped /></span>
              <span className="absolute left-[233px] top-[92px]"><Clamped /></span>
              <span className="absolute left-[354px] top-[92px]"><Constant /></span>
              <span className="absolute bottom-0 left-[358px] top-4 w-0.5 bg-[#3318a0]/40" />
            </div>
            <div className="flex w-2 shrink-0 justify-center py-0.5"><span className="w-1 rounded-full bg-[#7a7a7a]" /></div>
          </div>
          <div className="flex h-2 shrink-0 items-center px-0.5"><span className="h-1 flex-1 rounded-full bg-[#7a7a7a]" /></div>
        </div>
        <div className="flex w-[25px] shrink-0 flex-col items-center pr-0.5">
          {timelineTools.map(([l, icon], i) => (
            <IconButton key={l} label={l} pressed={i === 0} className="h-[23px] w-[19px]">{icon}</IconButton>
          ))}
          <span className="my-1 h-px w-4 bg-[#d2d2d0]" />
          <div className="opacity-60">
            <IconButton label="Clamped" className="h-[23px] w-[19px]"><Clamped /></IconButton>
            <IconButton label="TCB" className="h-[23px] w-[19px]"><Tcb /></IconButton>
            <IconButton label="Constant" className="h-[23px] w-[19px]"><Constant /></IconButton>
            <IconButton label="Ease" className="h-[23px] w-[19px]"><Ease /></IconButton>
            <IconButton label="Linear" className="h-[23px] w-[19px]"><Linear /></IconButton>
          </div>
        </div>
      </div>
    </section>
  );
}

/* ---------- right column ---------- */

function RightColumn() {
  return (
    <aside className="flex w-[319px] shrink-0 flex-col border-l-2 border-r border-[#b3b3b1] bg-white">
      <Tabs items={[["Canvases", <CanvasNote />], ["Palette", <Palette />], ["Navigator", <Compass />], ["Info", <Info />]]} />
      <div className="h-[136px] shrink-0">
        <div className="flex h-4 items-center pl-3"><CanvasNote /><span>Synfig Animation 1</span></div>
      </div>
      <div className="h-0.5 shrink-0 bg-[#b3b3b1]" />
      <Tabs items={[["Tool options", <Move />], ["History", <History />]]} />
      <div className="flex h-[164px] shrink-0 flex-col px-1 pt-1">
        <h2 className="mb-px font-bold">SmoothMove Tool</h2>
        <div className="flex items-center justify-between pr-[6px]">
          <label htmlFor="radius" className="text-[#555]">Radius:</label>
          <div className="flex h-[23px] overflow-hidden rounded-[2px] border border-[#c9c9c6]">
            <input id="radius" defaultValue="1,000" className="w-[61px] pl-[5px] outline-none" />
            <button type="button" aria-label="Decrease radius" className="w-[22px] border-l border-[#e4e4e4] text-[13px] leading-none">−</button>
            <button type="button" aria-label="Increase radius" className="w-[22px] border-l border-[#e4e4e4] text-[13px] leading-none">+</button>
          </div>
        </div>
      </div>
      <div className="h-0.5 shrink-0 bg-[#b3b3b1]" />
      <Tabs items={[["Layers", <LayersIcon />], ["Sets", <SetsIcon />]]} />
      <table className="w-full table-fixed border-collapse text-left leading-3">
        <colgroup><col className="w-4" /><col className="w-[25px]" /><col /><col className="w-[47px]" /></colgroup>
        <thead>
          <tr className="h-4 text-[#8d8d8d]">
            <th className="border-r border-[#eee] p-0" aria-label="Visible" />
            <th className="border-r border-[#eee] p-0" aria-label="Icon" />
            <th className="p-0 font-semibold">Name</th>
            <th className="border-l border-[#eee] p-0 font-semibold">Z Depth</th>
          </tr>
        </thead>
        <tbody>
          <tr className="h-[14px] bg-[#4a90d2] text-white">
            <td className="p-0">
              <label className="relative ml-[2px] flex size-[11px] items-center justify-center border border-[#234] bg-white">
                <input type="checkbox" defaultChecked aria-label="Circle visible" className="peer absolute inset-0 appearance-none" />
                <Svg className="hidden size-2 peer-checked:block"><path d="M2 8l4 4.500L14 3" stroke="#111" strokeWidth="3" /></Svg>
              </label>
            </td>
            <td className="p-0"><span className="flex justify-end pr-px"><Svg className="size-[11px]"><circle cx="8" cy="8" r="7" fill="#4379b8" stroke="#2f5f9d" strokeWidth="1.500" /></Svg></span></td>
            <td className="p-0 pl-[3px]">Circle</td>
            <td className="p-0 pl-1">0,0</td>
          </tr>
        </tbody>
      </table>
      <div className="flex-1" />
      <div className="flex h-[25px] shrink-0 items-center border-b border-[#bcbcb9] bg-[#e6e6e5] pl-[2px]">
        <IconButton label="New layer"><PlusBlue /></IconButton>
        <span className="mx-[5px] h-4 w-px bg-[#d2d2d0]" />
        <IconButton label="Raise layer" className="h-[18px] w-[19px]"><Chevrons /></IconButton>
        <IconButton label="Lower layer" className="h-[18px] w-[19px]"><Chevrons down /></IconButton>
        <span className="mx-1 h-4 w-px bg-[#d2d2d0]" />
        <IconButton label="Duplicate layer" className="h-[18px] w-[20px]"><Duplicate /></IconButton>
        <IconButton label="Group layer" className="h-[18px] w-[19px]"><FolderGreen /></IconButton>
        <IconButton label="Ungroup layer" className="h-[18px] w-[19px]"><FolderPale /></IconButton>
        <IconButton label="Remove layer" className="h-[18px] w-[19px]"><DeleteRed /></IconButton>
        <span className="mx-1 h-4 w-px bg-[#d2d2d0]" />
        <IconButton label="Cut" className="h-[18px] w-[20px]"><Scissors /></IconButton>
        <IconButton label="Copy" className="h-[18px] w-[20px]"><Copy /></IconButton>
        <IconButton label="Paste" className="h-[18px] w-[19px]"><Paste /></IconButton>
      </div>
    </aside>
  );
}

/* ---------- menus ---------- */

function MenuItem({ children, icon, active, arrow }: { children: ReactNode; icon?: ReactNode; active?: boolean; arrow?: boolean }) {
  return (
    <button type="button" role="menuitem" className={`flex h-4 w-full items-center whitespace-nowrap pr-1 text-left ${active ? "bg-[#4a90d2] text-white" : ""}`}>
      <span className="flex w-[18px] shrink-0 items-center justify-center">{icon}</span>
      <span className="flex-1">{children}</span>
      {arrow && <Svg className="size-2"><path d="M4 2l7 6-7 6z" fill="currentColor" /></Svg>}
    </button>
  );
}

function ContextMenu() {
  return (
    <>
      <div role="menu" aria-label="Parameter" className="absolute left-[211px] top-[558px] w-[158px] border border-[#c4c4c4] bg-white py-px shadow-sm">
        <MenuItem icon={<ConvertIcon />} arrow>Convert</MenuItem>
        <MenuItem active arrow>Interpolation</MenuItem>
        <MenuItem>Forbid Animation</MenuItem>
        <MenuItem icon={<Save pencil />}>Export Value to project library</MenuItem>
        <MenuItem>Add Waypoint</MenuItem>
      </div>
      <div role="menu" aria-label="Interpolation" className="absolute left-[367px] top-[574px] w-[74px] border border-[#c4c4c4] bg-white py-px shadow-sm">
        <MenuItem>Default</MenuItem>
        <MenuItem icon={<Clamped />}>Clamped</MenuItem>
        <MenuItem icon={<Tcb />}>TCB</MenuItem>
        <MenuItem icon={<Constant />}>Constant</MenuItem>
        <MenuItem icon={<Ease />} active>Ease</MenuItem>
        <MenuItem icon={<Linear />}>Linear</MenuItem>
      </div>
      <svg viewBox="0 0 12 16" className="absolute left-[400px] top-[645px] h-[13px] w-[9px]" aria-hidden="true">
        <path d="M1 1v12l3-2.600 2 4.600 2.200-1-2-4.400H10.500z" fill="#fff" stroke="#333" />
      </svg>
    </>
  );
}

const menus = ["File", "Edit", "View", "Canvas", "Toolbox", "Layer", "Plug-Ins", "Window", "Help"];

export default function App() {
  return (
    <div className="relative flex h-screen flex-col overflow-hidden bg-[#ebebea] font-['Noto_Sans','Open_Sans',sans-serif] text-[9px] leading-3 text-[#333]">
      <header className="relative flex h-[25px] shrink-0 items-center justify-center border-b border-[#d6d6d6] bg-[#ebebeb]">
        <h1 className="font-bold text-[#444]">Synfig Studio - UNOFFICIAL BUILD 1.5.3 2025-08-01 b9880a2</h1>
        <div className="absolute inset-y-0 right-[3px] flex items-center gap-[5px]">
          {[["Minimize", "M5 9h6"], ["Restore", "M5 7h4v4H5zM7 5h4v4"], ["Close", "M5 5l6 6M11 5l-6 6"]].map(([l, d]) => (
            <button key={l} type="button" aria-label={l} className="flex size-[18px] items-center justify-center">
              <Svg className="size-[14px]"><circle cx="8" cy="8" r="7.500" fill="#dededd" /><path d={d} stroke="#444" strokeWidth="1.200" /></Svg>
            </button>
          ))}
        </div>
      </header>
      <nav aria-label="Main menu" className="flex h-4 shrink-0 items-center gap-[10px] bg-[#f0f0ef] pl-[5px]">
        {menus.map((m) => <button key={m} type="button">{m}</button>)}
      </nav>
      <div className="flex min-h-0 flex-1">
        <div className="flex min-w-0 flex-1 flex-col">
          <div className="flex min-h-0 flex-1">
            <Toolbox />
            <CanvasPanel />
          </div>
          <div className="flex h-[262px] shrink-0 border-t-2 border-[#b3b3b1]">
            <ParamsPanel />
            <Timeline />
          </div>
        </div>
        <RightColumn />
      </div>
      <ContextMenu />
    </div>
  );
}
